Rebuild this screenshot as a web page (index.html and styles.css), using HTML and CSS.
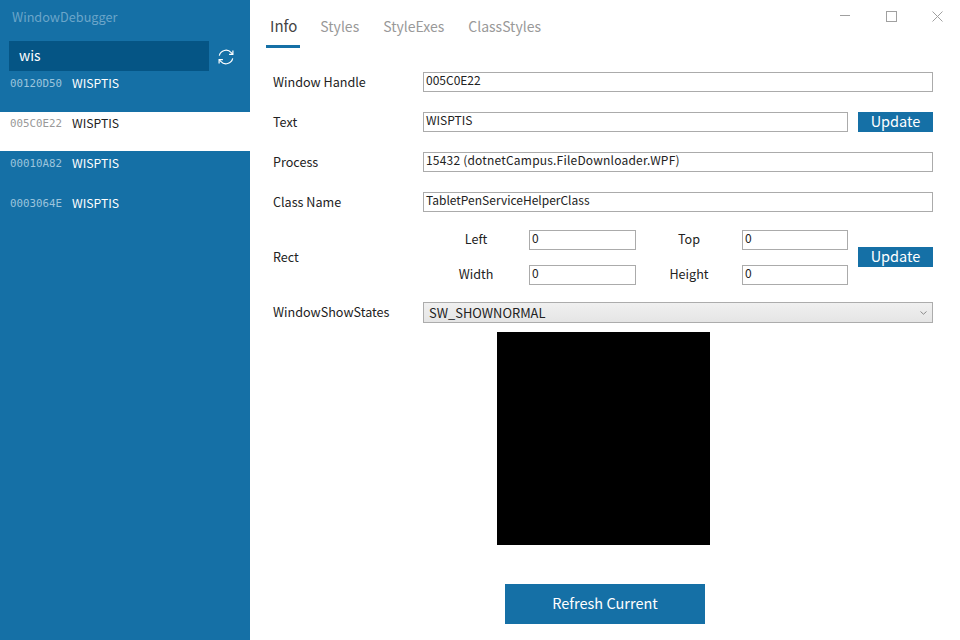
FILE: index.html
```html
<!DOCTYPE html>
<html lang="en">
<head>
<meta charset="utf-8">
<title>WindowDebugger</title>
<link rel="stylesheet" href="styles.css">
</head>
<body>
<div class="app">
  <aside class="sidebar">
    <div class="app-title">WindowDebugger</div>
    <div class="search-row">
      <div class="search">wis</div>
      <svg class="refresh-icon" width="16" height="16" viewBox="0 0 16 16" fill="none" stroke="#fff" stroke-width="1.2">
        <path d="M1.3 6.6A6.9 6.9 0 0 1 13.2 3.6L14.6 5.2"/>
        <path d="M14.9 1.6V5.4H11.1"/>
        <path d="M14.7 9.4A6.9 6.9 0 0 1 2.8 12.4L1.4 10.8"/>
        <path d="M1.1 14.4V10.6H4.9"/>
      </svg>
    </div>
    <ul class="list">
      <li class="item"><span class="hwnd">00120D50</span><span class="name">WISPTIS</span></li>
      <li class="item selected"><span class="hwnd">005C0E22</span><span class="name">WISPTIS</span></li>
      <li class="item"><span class="hwnd">00010A82</span><span class="name">WISPTIS</span></li>
      <li class="item"><span class="hwnd">0003064E</span><span class="name">WISPTIS</span></li>
    </ul>
  </aside>
  <main class="main">
    <header class="top">
      <nav class="tabs">
        <span class="tab active">Info</span>
        <span class="tab">Styles</span>
        <span class="tab">StyleExes</span>
        <span class="tab">ClassStyles</span>
      </nav>
      <div class="win-controls">
        <svg width="11" height="11" viewBox="0 0 11 11"><path d="M0 4.5H10" stroke="#a0a0a0"/></svg>
        <svg width="11" height="11" viewBox="0 0 11 11" fill="none"><rect x="0.5" y="0.5" width="10" height="10" stroke="#a0a0a0"/></svg>
        <svg width="11" height="11" viewBox="0 0 11 11" fill="none"><path d="M0.5 0.5L10.5 10.5M10.5 0.5L0.5 10.5" stroke="#a0a0a0"/></svg>
      </div>
    </header>
    <section class="form">
      <div class="label">Window Handle</div>
      <div class="field wide">005C0E22</div>

      <div class="label">Text</div>
      <div class="field short">WISPTIS</div>
      <div class="btn">Update</div>

      <div class="label">Process</div>
      <div class="field wide long-text">15432 (dotnetCampus.FileDownloader.WPF)</div>

      <div class="label">Class Name</div>
      <div class="field wide">TabletPenServiceHelperClass</div>

      <div class="label mid">Rect</div>
      <div class="rect">
        <span class="rect-label">Left</span><div class="field">0</div>
        <span class="rect-label">Top</span><div class="field">0</div>
        <span class="rect-label">Width</span><div class="field">0</div>
        <span class="rect-label">Height</span><div class="field">0</div>
      </div>
      <div class="btn mid">Update</div>

      <div class="label">WindowShowStates</div>
      <div class="select wide">
        <span>SW_SHOWNORMAL</span>
        <svg width="7" height="4" viewBox="0 0 7 4" fill="none"><path d="M0.5 0.5L3.5 3.2L6.5 0.5" stroke="#8a8a8a"/></svg>
      </div>
    </section>
    <div class="preview"></div>
    <div class="refresh-btn">Refresh Current</div>
  </main>
</div>
</body>
</html>
```
FILE: styles.css
```css
* { box-sizing: border-box; }
html, body { margin: 0; padding: 0; }
body {
  width: 960px;
  height: 640px;
  overflow: hidden;
  background: #fff;
  font-family: "Noto Sans CJK SC", "Noto Sans", sans-serif;
  font-size: 12.6px;
  color: #222;
}
.app { display: flex; width: 960px; height: 640px; }

.sidebar { width: 250px; flex: none; background: #1570a6; color: #fff; }
.app-title { height: 41px; padding: 8px 0 0 12px; font-size: 12.7px; line-height: 18px; color: #6ba5c9; }
.search-row { display: flex; align-items: center; gap: 9px; padding-left: 9px; height: 31px; }
.search { width: 200px; height: 30px; margin-bottom: 1px; background: #055585; padding-left: 10px; font-size: 14px; line-height: 29px; color: #fff; }
.refresh-icon { flex: none; }
.list { list-style: none; margin: 0; padding: 0; }
.item { display: flex; height: 40px; padding: 2px 0 0 10px; line-height: 18px; }
.item.selected { background: #fff; color: #222; height: 39px; margin-bottom: 1px; }
.hwnd { width: 62px; font-family: "DejaVu Sans Mono", monospace; font-size: 10.8px; line-height: 19px; color: #9cc4dc; }
.selected .hwnd { color: #999; }
.name { font-size: 12.2px; line-height: 19px; }

.main { flex: 1; min-width: 0; padding-right: 27px; display: flex; flex-direction: column; }
.top { height: 72px; display: flex; justify-content: space-between; }
.tabs { display: flex; height: 48px; padding-left: 16px; }
.tab { height: 48px; padding: 15px 4px 0; margin-right: 16px; font-size: 14px; line-height: 22px; color: #999; }
.tab.active { padding-right: 3px; font-size: 15px; color: #444; border-bottom: 3px solid #1570a6; }
.win-controls { display: flex; gap: 35px; padding-top: 11px; margin-right: -10px; }

.form {
  display: grid;
  grid-template-columns: 150px 435px 75px;
  grid-template-rows: 40px 40px 40px 38px 72px auto;
  align-items: start;
  padding-left: 23px;
  width: 683px;
}
.label { line-height: 20px; }
.field {
  height: 20px;
  border: 1px solid #ababab;
  padding-left: 2px;
  font-size: 12px;
  line-height: 13px;
  color: #222;
  background: #fff;
}
.wide { grid-column: 2 / 4; }
.short { margin-right: 10px; }
.long-text { letter-spacing: 0.2px; }
.btn { height: 20px; background: #1570a6; color: #fff; text-align: center; font-size: 14.5px; line-height: 18px; }
.mid { align-self: center; margin-bottom: 18px; }
.rect {
  display: grid;
  grid-template-columns: 106px 107px 106px 106px;
  grid-template-rows: 20px 20px;
  row-gap: 15px;
  height: 55px;
}
.rect-label { text-align: center; height: 20px; line-height: 18px; }
.select {
  height: 21px;
  border: 1px solid #acacac;
  background: linear-gradient(#f0f0f0, #e5e5e5);
  padding: 0 5px 0 5px;
  display: flex;
  align-items: center;
  justify-content: space-between;
  font-size: 12.9px;
}
.preview { width: 213px; height: 213px; background: #000; margin: 9px 0 0 247px; }
.refresh-btn { width: 200px; height: 40px; margin: 39px 0 0 255px; background: #1570a6; color: #fff; text-align: center; line-height: 38px; font-size: 14.5px; }
```
